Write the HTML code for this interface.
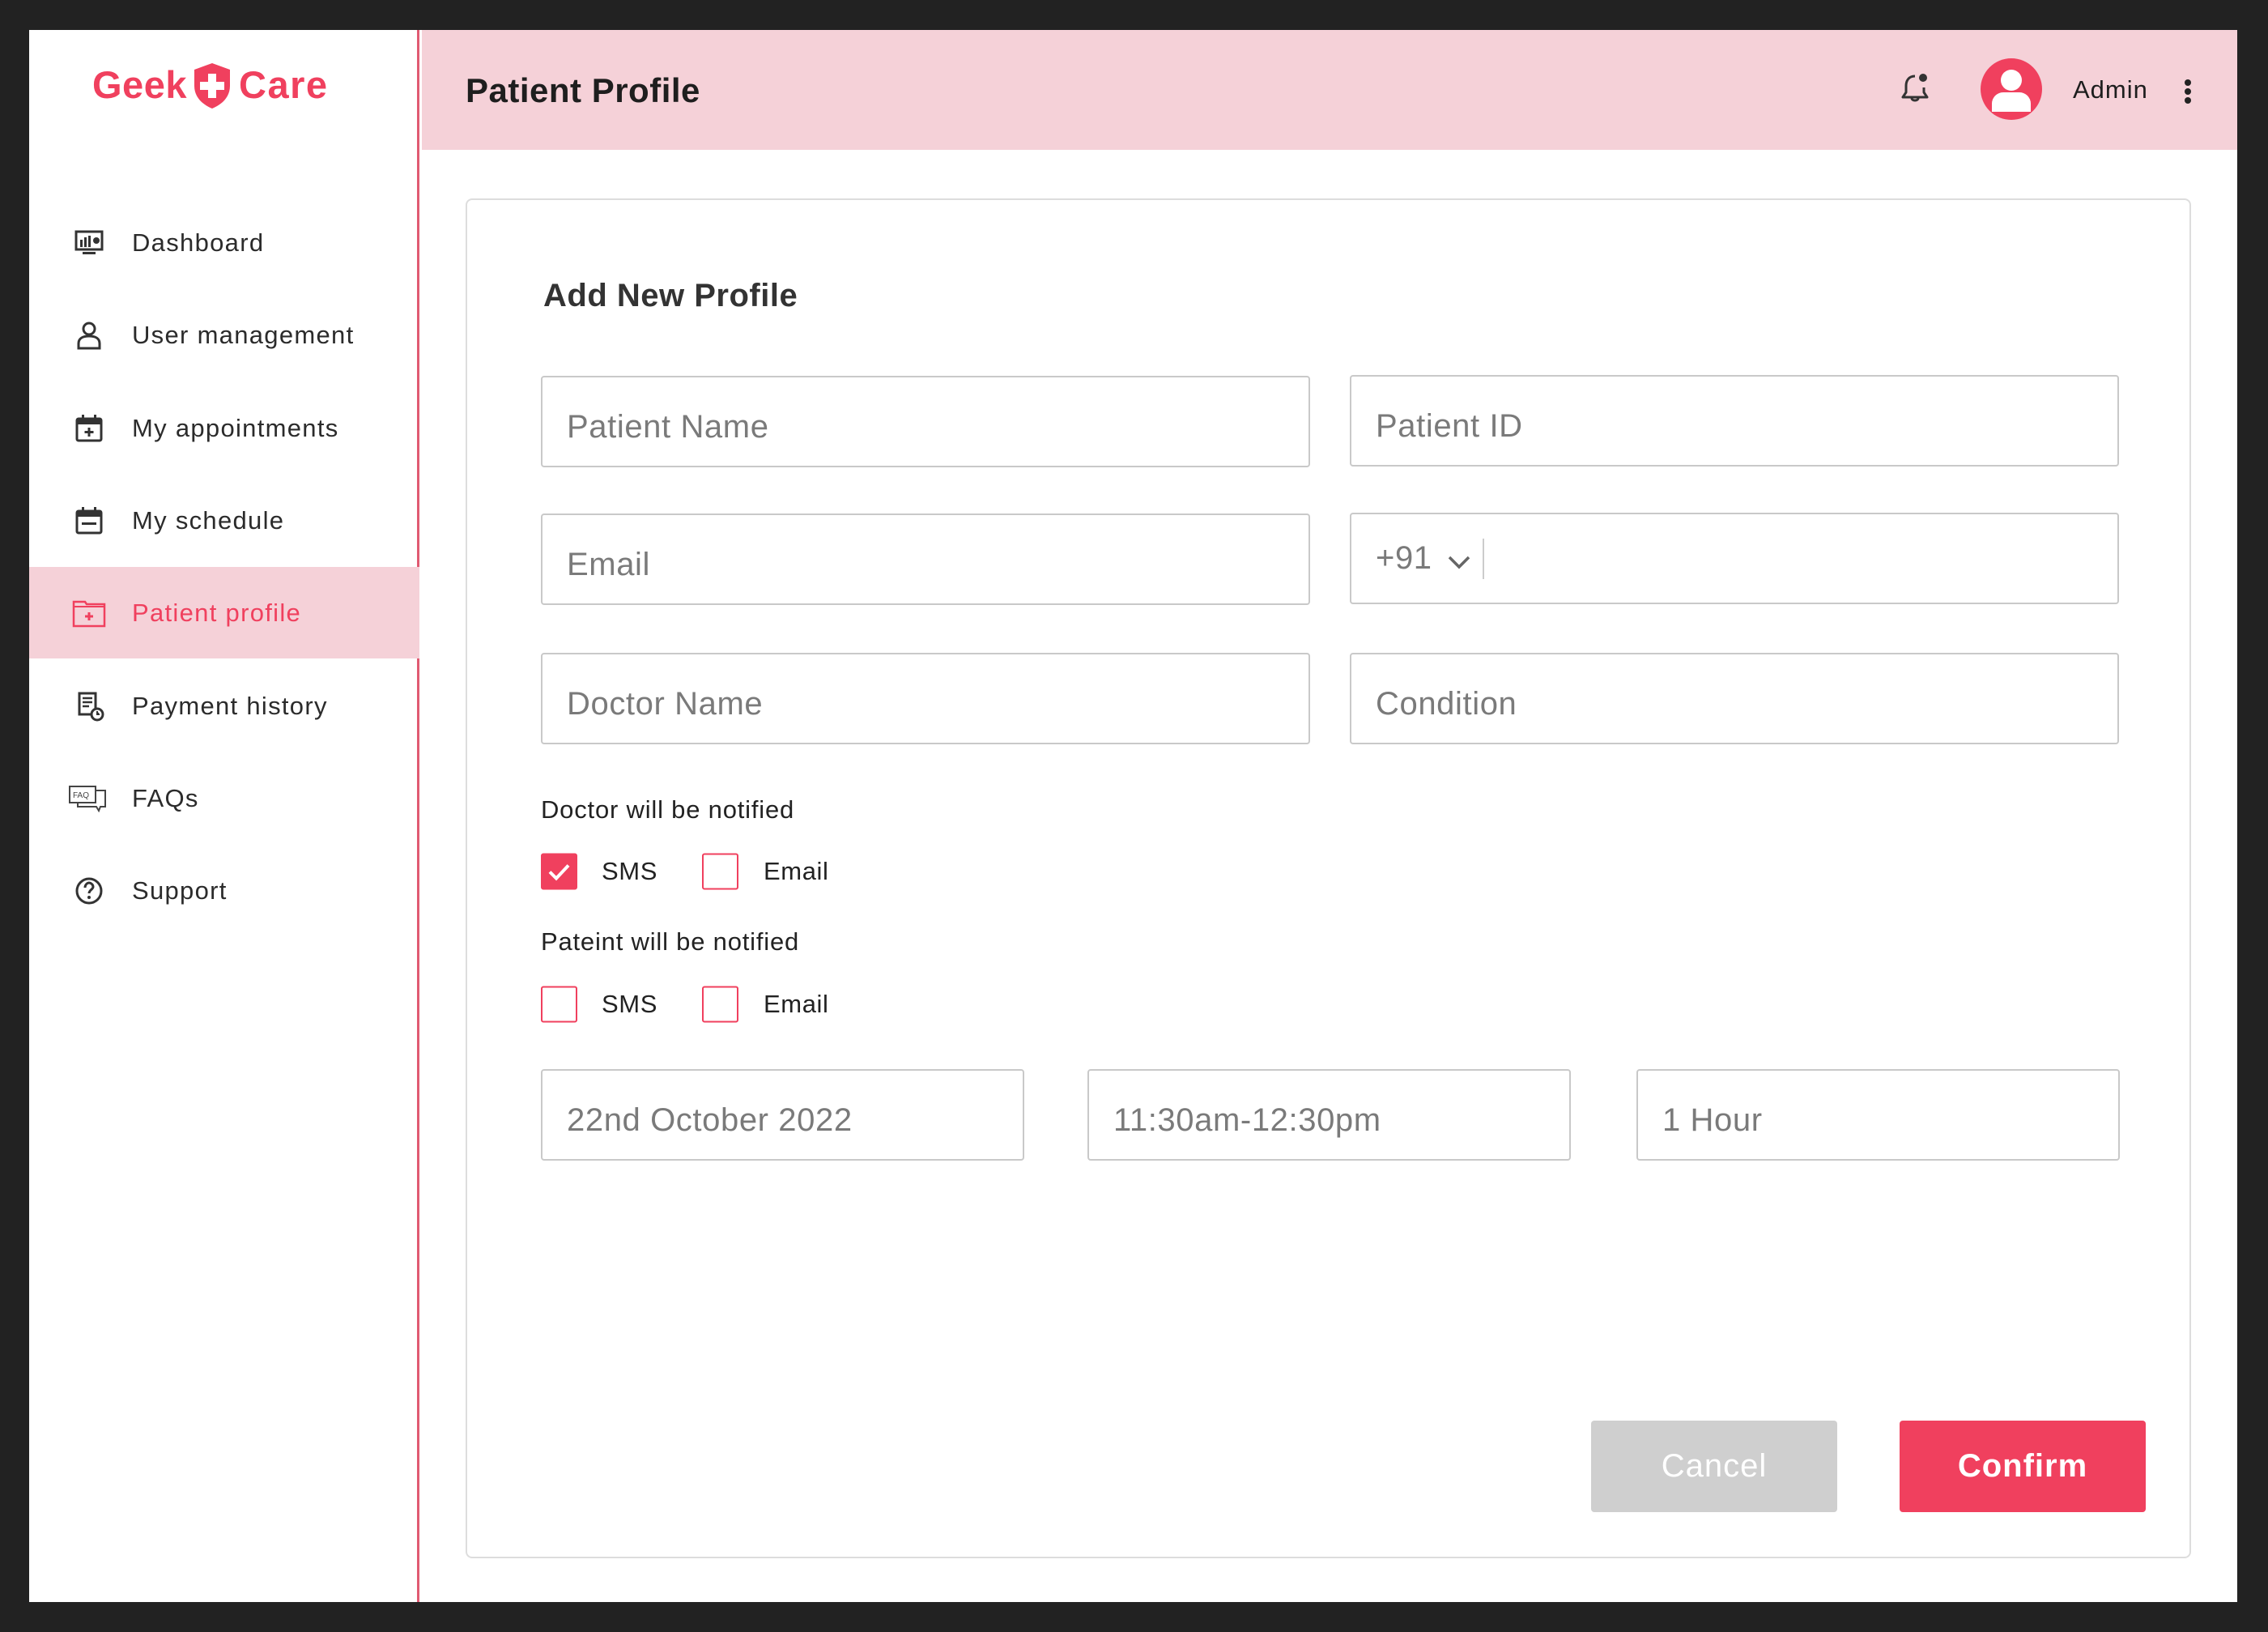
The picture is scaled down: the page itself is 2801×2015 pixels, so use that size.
<!DOCTYPE html>
<html><head><meta charset="utf-8"><style>
*{box-sizing:border-box;margin:0;padding:0}
body{width:2801px;height:2015px;background:#222;position:relative;font-family:"Liberation Sans",sans-serif;overflow:hidden}
.abs{position:absolute}
#main{left:36px;top:37px;width:2727px;height:1941px;background:#fff}
#side{left:36px;top:37px;width:482px;height:1941px;background:#fff;border-right:3px solid #e05a72}
#hdr{left:521px;top:37px;width:2242px;height:148px;background:#f5d1d8}
.nav{position:absolute;left:163px;font-size:31px;color:#2b2b2b;transform:translateY(-50%);letter-spacing:1.3px}
.ic{position:absolute;left:90px;width:40px;height:40px;transform:translateY(-50%)}
.inp{position:absolute;border:2px solid #c9c9c9;border-radius:4px;height:113px;font-size:40px;color:#7a7a7a;padding-left:30px;padding-top:14px;display:flex;align-items:center;letter-spacing:0.6px}
.lbl{position:absolute;left:668px;font-size:31px;color:#222;transform:translateY(-50%);letter-spacing:0.8px}
.cb{position:absolute;width:45px;height:45px;border:2px solid #f0405e;border-radius:3px;transform:translateY(-50%)}
.ct{position:absolute;font-size:31px;color:#222;transform:translateY(-50%);letter-spacing:0.6px}
.btn{position:absolute;top:1754px;width:304px;height:113px;border-radius:4px;color:#fff;font-size:40px;display:flex;align-items:center;justify-content:center;letter-spacing:1px}
</style></head><body>
<div id="main" class="abs"></div>
<div id="side" class="abs"></div>
<div id="hdr" class="abs"></div>

<!-- logo -->
<div class="abs" style="left:114px;top:77px;font-size:47px;font-weight:bold;color:#f0405e;letter-spacing:0.5px">Geek</div>
<svg class="abs" style="left:237px;top:76px" width="50" height="60" viewBox="0 0 50 60"><path d="M25 2 L47 10 L47 30 C47 44 37 53 25 58 C13 53 3 44 3 30 L3 10 Z" fill="#f0405e"/><rect x="20" y="15" width="10" height="30" fill="#fff"/><rect x="10" y="25" width="30" height="10" fill="#fff"/></svg>
<div class="abs" style="left:295px;top:77px;font-size:47px;font-weight:bold;color:#f0405e;letter-spacing:1.5px">Care</div>

<!-- nav -->
<div class="abs" style="left:36px;top:700px;width:482px;height:113px;background:#f5d1d8"></div>
<svg class="ic" style="top:300px" viewBox="0 0 40 40"><rect x="4" y="6" width="32" height="22" fill="none" stroke="#333" stroke-width="3"/><rect x="9" y="16" width="3" height="9" fill="#333"/><rect x="14" y="13" width="3" height="12" fill="#333"/><rect x="19" y="11" width="3" height="14" fill="#333"/><circle cx="29" cy="17" r="4" fill="#333"/><rect x="12" y="31" width="16" height="3" fill="#333"/></svg>
<div class="nav" style="top:300px">Dashboard</div>
<svg class="ic" style="top:414px" viewBox="0 0 40 40"><circle cx="20" cy="12" r="7" fill="none" stroke="#333" stroke-width="3"/><path d="M7 36 L7 30 C7 24 12 21 20 21 C28 21 33 24 33 30 L33 36 Z" fill="none" stroke="#333" stroke-width="3"/></svg>
<div class="nav" style="top:414px">User management</div>
<svg class="ic" style="top:529px" viewBox="0 0 40 40"><rect x="5" y="8" width="30" height="27" rx="2" fill="none" stroke="#333" stroke-width="3"/><rect x="5" y="8" width="30" height="7" fill="#333"/><rect x="11" y="3" width="3" height="8" fill="#333"/><rect x="26" y="3" width="3" height="8" fill="#333"/><path d="M20 19v11M14.5 24.5h11" stroke="#333" stroke-width="3"/></svg>
<div class="nav" style="top:529px">My appointments</div>
<svg class="ic" style="top:643px" viewBox="0 0 40 40"><rect x="5" y="8" width="30" height="27" rx="2" fill="none" stroke="#333" stroke-width="3"/><rect x="5" y="8" width="30" height="7" fill="#333"/><rect x="11" y="3" width="3" height="8" fill="#333"/><rect x="26" y="3" width="3" height="8" fill="#333"/><rect x="11" y="22" width="18" height="3" fill="#333"/></svg>
<div class="nav" style="top:643px">My schedule</div>
<svg class="ic" style="top:757px;left:88px;width:44px" viewBox="0 0 44 40"><path d="M3 6h14l2 3h22v27H3z" fill="none" stroke="#f0405e" stroke-width="2.5"/><path d="M3 12h38" stroke="#f0405e" stroke-width="2"/><path d="M22 19v10M17 24h10" stroke="#f0405e" stroke-width="3"/></svg>
<div class="nav" style="top:757px;color:#f0405e">Patient profile</div>
<svg class="ic" style="top:872px" viewBox="0 0 40 40"><path d="M8 4h20v26H8z" fill="none" stroke="#333" stroke-width="3"/><path d="M12 10h12M12 15h12M12 20h8" stroke="#333" stroke-width="2.5"/><circle cx="30" cy="30" r="7" fill="#fff" stroke="#333" stroke-width="3"/><path d="M30 26v4h3" stroke="#333" stroke-width="2"/></svg>
<div class="nav" style="top:872px">Payment history</div>
<svg class="ic" style="top:986px;left:84px;width:50px" viewBox="0 0 50 40"><rect x="2" y="5" width="32" height="20" fill="none" stroke="#444" stroke-width="2"/><path d="M34 10h12v20h-6l-2 5-3-5H12v-5" fill="none" stroke="#444" stroke-width="2"/><text x="6" y="19" font-size="10" fill="#444" font-family="Liberation Sans">FAQ</text></svg>
<div class="nav" style="top:986px">FAQs</div>
<svg class="ic" style="top:1100px" viewBox="0 0 40 40"><circle cx="20" cy="20" r="15" fill="none" stroke="#333" stroke-width="3"/><path d="M15 16c0-4 3-6 5-6s5 2 5 5-5 4-5 8" fill="none" stroke="#333" stroke-width="3"/><circle cx="20" cy="28" r="2" fill="#333"/></svg>
<div class="nav" style="top:1100px">Support</div>

<!-- header -->
<div class="abs" style="left:575px;top:88px;font-size:42px;font-weight:bold;color:#1e1e1e;letter-spacing:0.5px">Patient Profile</div>
<svg class="abs" style="left:2345px;top:88px" width="42" height="44" viewBox="0 0 42 44"><path d="M20 6c-8 0-11 6-11 12v8l-4 6h30l-4-6v-6" fill="none" stroke="#333" stroke-width="3" stroke-linejoin="round"/><path d="M16 33c0 4 8 4 8 0" fill="none" stroke="#333" stroke-width="3"/><circle cx="30" cy="8" r="5" fill="#333"/></svg>
<div class="abs" style="left:2446px;top:72px;width:76px;height:76px;border-radius:50%;background:#f0405e;overflow:hidden">
<div class="abs" style="left:25px;top:14px;width:26px;height:26px;border-radius:50%;background:#fff"></div>
<div class="abs" style="left:14px;top:42px;width:48px;height:24px;border-radius:14px 14px 0 0;background:#fff"></div></div>
<div class="abs" style="left:2560px;top:93px;font-size:31px;color:#1e1e1e;letter-spacing:1px">Admin</div>
<div class="abs" style="left:2698px;top:98px;width:8px;height:8px;border-radius:50%;background:#222;box-shadow:0 11px 0 #222,0 22px 0 #222"></div>

<!-- card -->
<div class="abs" style="left:575px;top:245px;width:2131px;height:1679px;border:2px solid #ddd;border-radius:8px"></div>
<div class="abs" style="left:671px;top:343px;font-size:40px;font-weight:bold;color:#333;letter-spacing:0.5px">Add New Profile</div>

<div class="inp" style="left:668px;top:464px;width:950px">Patient Name</div>
<div class="inp" style="left:1667px;top:463px;width:950px">Patient ID</div>
<div class="inp" style="left:668px;top:634px;width:950px">Email</div>
<div class="inp" style="left:1667px;top:633px;width:950px;padding-top:0">+91
<svg style="margin-left:18px;margin-top:8px" width="30" height="20" viewBox="0 0 30 20"><path d="M3 4l12 12 12-12" fill="none" stroke="#666" stroke-width="3.5"/></svg>
<div style="width:2px;height:50px;background:#ccc;margin-left:14px"></div></div>
<div class="inp" style="left:668px;top:806px;width:950px">Doctor Name</div>
<div class="inp" style="left:1667px;top:806px;width:950px">Condition</div>

<div class="lbl" style="top:1000px">Doctor will be notified</div>
<div class="cb" style="left:668px;top:1076px;background:#f0405e"><svg width="41" height="41" viewBox="0 0 41 41"><path d="M9 21l8 8 15-16" fill="none" stroke="#fff" stroke-width="4"/></svg></div>
<div class="ct" style="left:743px;top:1076px">SMS</div>
<div class="cb" style="left:867px;top:1076px"></div>
<div class="ct" style="left:943px;top:1076px">Email</div>

<div class="lbl" style="top:1163px">Pateint will be notified</div>
<div class="cb" style="left:668px;top:1240px"></div>
<div class="ct" style="left:743px;top:1240px">SMS</div>
<div class="cb" style="left:867px;top:1240px"></div>
<div class="ct" style="left:943px;top:1240px">Email</div>

<div class="inp" style="left:668px;top:1320px;width:597px">22nd October 2022</div>
<div class="inp" style="left:1343px;top:1320px;width:597px">11:30am-12:30pm</div>
<div class="inp" style="left:2021px;top:1320px;width:597px">1 Hour</div>

<div class="btn" style="left:1965px;background:#cfcfcf">Cancel</div>
<div class="btn" style="left:2346px;background:#f0405e;font-weight:bold">Confirm</div>
</body></html>
